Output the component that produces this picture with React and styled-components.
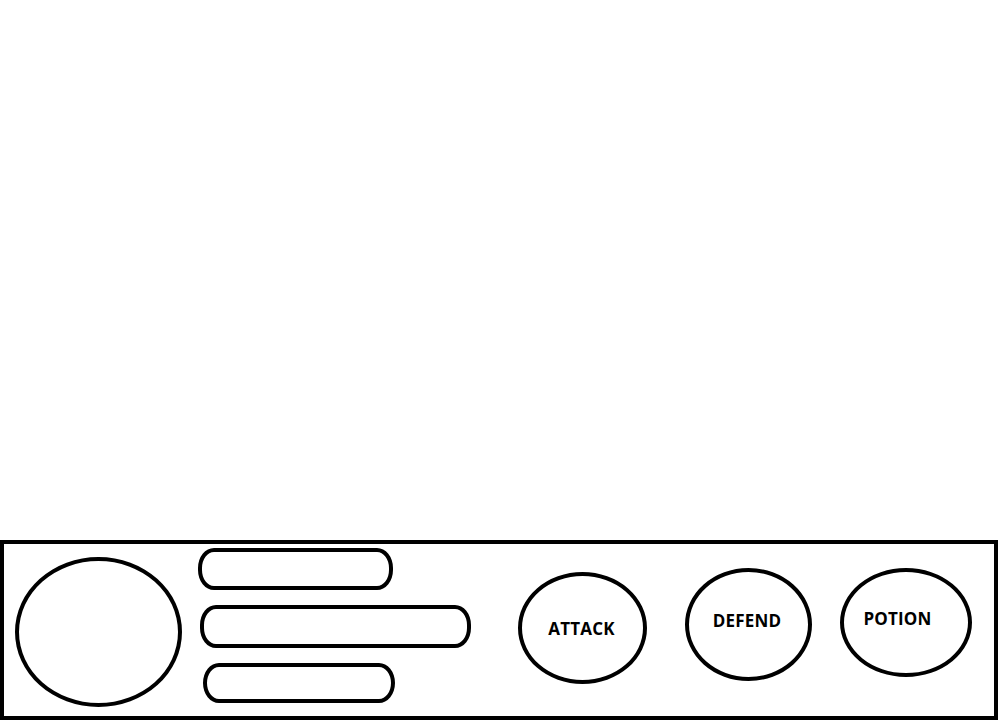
import styled, { createGlobalStyle } from "styled-components";

const GlobalStyle = createGlobalStyle`
    html, body {
        margin: 0;
        padding: 0;
        background: #ffffff;
    }

    body {
        font-family: "Open Sans", "Liberation Sans", sans-serif;
    }
`;

const Screen = styled.div`
    display: flex;
    flex-direction: column;
    justify-content: flex-end;
    height: 720px;
    width: 1000px;
    box-sizing: border-box;
`;

const Panel = styled.div`
    display: flex;
    align-items: flex-start;
    box-sizing: border-box;
    width: 998px;
    height: 180px;
    border: 4px solid #000000;
`;

const Portrait = styled.div`
    flex: none;
    box-sizing: border-box;
    width: 167px;
    height: 150px;
    margin: 13px 0 0 11px;
    border: 4px solid #000000;
    border-radius: 50%;
`;

const Stats = styled.div`
    display: flex;
    flex-direction: column;
    gap: 15px;
    margin: 4px 0 0 16px;
    width: 273px;
`;

const StatBar = styled.div`
    box-sizing: border-box;
    width: ${(p) => p.$w}px;
    height: ${(p) => p.$h}px;
    margin-left: ${(p) => p.$shift}px;
    border: 4px solid #000000;
    border-radius: 16px / 20px;
`;

const Actions = styled.div`
    display: flex;
    align-items: flex-start;
`;

const ActionButton = styled.button`
    flex: none;
    display: flex;
    align-items: center;
    justify-content: center;
    box-sizing: border-box;
    width: ${(p) => p.$w}px;
    height: ${(p) => p.$h}px;
    margin: ${(p) => p.$top}px 0 0 ${(p) => p.$left}px;
    padding: 0 ${(p) => p.$nudge}px ${(p) => p.$lift}px 0;
    background: #ffffff;
    border: 4px solid #000000;
    border-radius: 50%;
    font-family: "Open Sans", "Liberation Sans", sans-serif;
    font-size: 17px;
    font-weight: 700;
    letter-spacing: 0.2px;
    color: #000000;
    cursor: pointer;
`;

const STATS = [
    { id: "name", w: 195, h: 42, shift: 0 },
    { id: "health", w: 271, h: 43, shift: 2 },
    { id: "mana", w: 192, h: 40, shift: 5 },
];

const ACTIONS = [
    { label: "ATTACK", w: 129, h: 112, top: 28, left: 47, nudge: 2, lift: 0 },
    { label: "DEFEND", w: 127, h: 113, top: 24, left: 38, nudge: 3, lift: 8 },
    { label: "POTION", w: 132, h: 109, top: 24, left: 28, nudge: 17, lift: 8 },
];

const App = () => {
    return (
        <>
            <GlobalStyle />
            <Screen>
                <Panel>
                    <Portrait />
                    <Stats>
                        { STATS.map((s) => (
                            <StatBar key={s.id} $w={s.w} $h={s.h} $shift={s.shift} />
                        )) }
                    </Stats>
                    <Actions>
                        { ACTIONS.map((a) => (
                            <ActionButton
                                key={a.label}
                                $w={a.w}
                                $h={a.h}
                                $top={a.top}
                                $left={a.left}
                                $nudge={a.nudge}
                                $lift={a.lift}
                            >
                                {a.label}
                            </ActionButton>
                        )) }
                    </Actions>
                </Panel>
            </Screen>
        </>
    )
}

export default App;
